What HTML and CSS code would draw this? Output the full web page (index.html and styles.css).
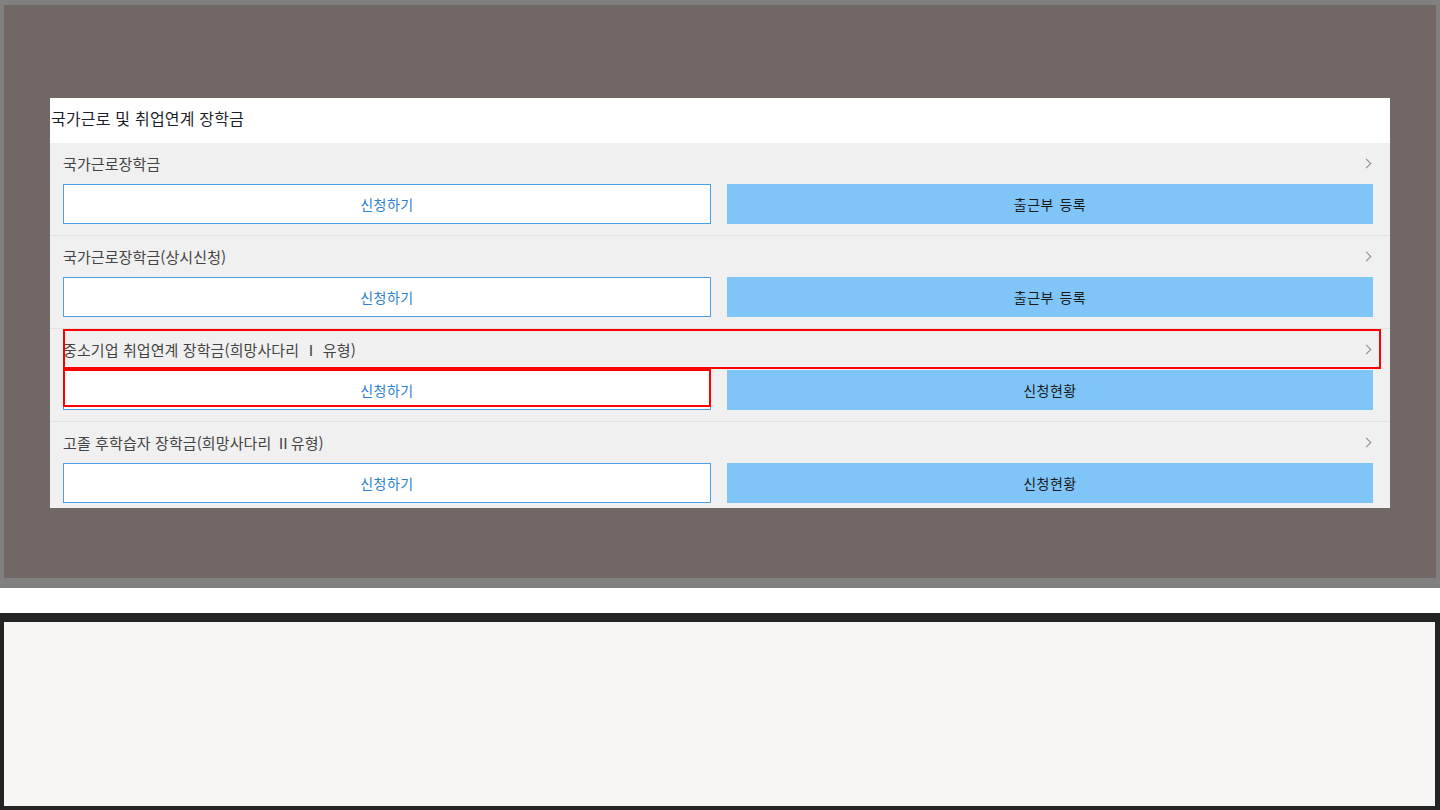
FILE: index.html
```html
<!DOCTYPE html>
<html lang="ko">
<head>
    <meta charset="UTF-8">
    <title>장학금 신청</title>
    <link rel="stylesheet" href="styles.css">
</head>
<body>
    <div class="stage">
        <div class="panel">
            <div class="panel_title">국가근로 및 취업연계 장학금</div>
            <div class="item">
                <div class="item_head">
                    <span class="item_name">국가근로장학금</span>
                    <span class="chevron"></span>
                </div>
                <div class="item_btns">
                    <button class="apply">신청하기</button>
                    <button class="sub">출근부 등록</button>
                </div>
            </div>
            <div class="item">
                <div class="item_head">
                    <span class="item_name">국가근로장학금(상시신청)</span>
                    <span class="chevron"></span>
                </div>
                <div class="item_btns">
                    <button class="apply">신청하기</button>
                    <button class="sub">출근부 등록</button>
                </div>
            </div>
            <div class="item">
                <div class="item_head">
                    <span class="item_name">중소기업 취업연계 장학금(희망사다리 Ⅰ 유형)</span>
                    <span class="chevron"></span>
                </div>
                <div class="item_btns">
                    <button class="apply">신청하기</button>
                    <button class="sub">신청현황</button>
                </div>
                <div class="mark mark_head"></div>
                <div class="mark mark_btn"></div>
            </div>
            <div class="item">
                <div class="item_head">
                    <span class="item_name">고졸 후학습자 장학금(희망사다리 Ⅱ유형)</span>
                    <span class="chevron"></span>
                </div>
                <div class="item_btns">
                    <button class="apply">신청하기</button>
                    <button class="sub">신청현황</button>
                </div>
            </div>
        </div>
    </div>
    <div class="spacer"></div>
    <div class="viewer"></div>
</body>
</html>
```

FILE: styles.css
```css
* {
    margin: 0;
    padding: 0;
    box-sizing: border-box;
}

body {
    background-color: #fff;
    font-family: "Noto Sans CJK KR", "Noto Sans", sans-serif;
}

.stage {
    height: 588px;
    background-color: #716866;
    border-style: solid;
    border-color: #808080;
    border-width: 5px 4px 10px 4px;
    padding-top: 93px;
    padding-left: 46px;
}

.panel {
    width: 1340px;
    height: 410px;
    background-color: #fff;
    overflow: hidden;
}

.panel_title {
    height: 45px;
    line-height: 40px;
    padding-left: 1px;
    font-size: 16px;
    letter-spacing: 0.2px;
    color: #1d1f2b;
}

.item {
    position: relative;
    height: 93px;
    background-color: #f0f0f0;
    border-bottom: 1px solid #e2e2e2;
    padding: 10px 17px 0 13px;
}

.item_head {
    display: flex;
    justify-content: space-between;
    align-items: center;
    height: 20px;
    margin-bottom: 11px;
}

.item_name {
    font-size: 15px;
    letter-spacing: 0.1px;
    color: #444;
}

.chevron {
    width: 7px;
    height: 7px;
    border-top: 1px solid #888;
    border-right: 1px solid #888;
    transform: rotate(45deg);
    margin-right: 3px;
    margin-top: 1px;
}

.item_btns {
    display: flex;
    gap: 16px;
}

.item_btns button {
    flex: 1;
    height: 40px;
    font-family: inherit;
    font-size: 14px;
    letter-spacing: 0.5px;
    word-spacing: 1px;
    border: none;
}

.apply {
    background-color: #fff;
    border: 1px solid #4aa0e6 !important;
    color: #2b7fcf;
}

.sub {
    background-color: #80c5f8;
    color: #1a1a1a;
}

.mark {
    position: absolute;
    border: 2px solid #f00;
}

.mark_head {
    top: 0;
    left: 13px;
    width: 1318px;
    height: 40px;
}

.mark_btn {
    top: 40px;
    left: 13px;
    width: 648px;
    height: 38px;
}

.spacer {
    height: 25px;
}

.viewer {
    height: 197px;
    background-color: #f6f5f3;
    border-style: solid;
    border-color: #232323;
    border-width: 9px 5px 4px 4px;
}
```
